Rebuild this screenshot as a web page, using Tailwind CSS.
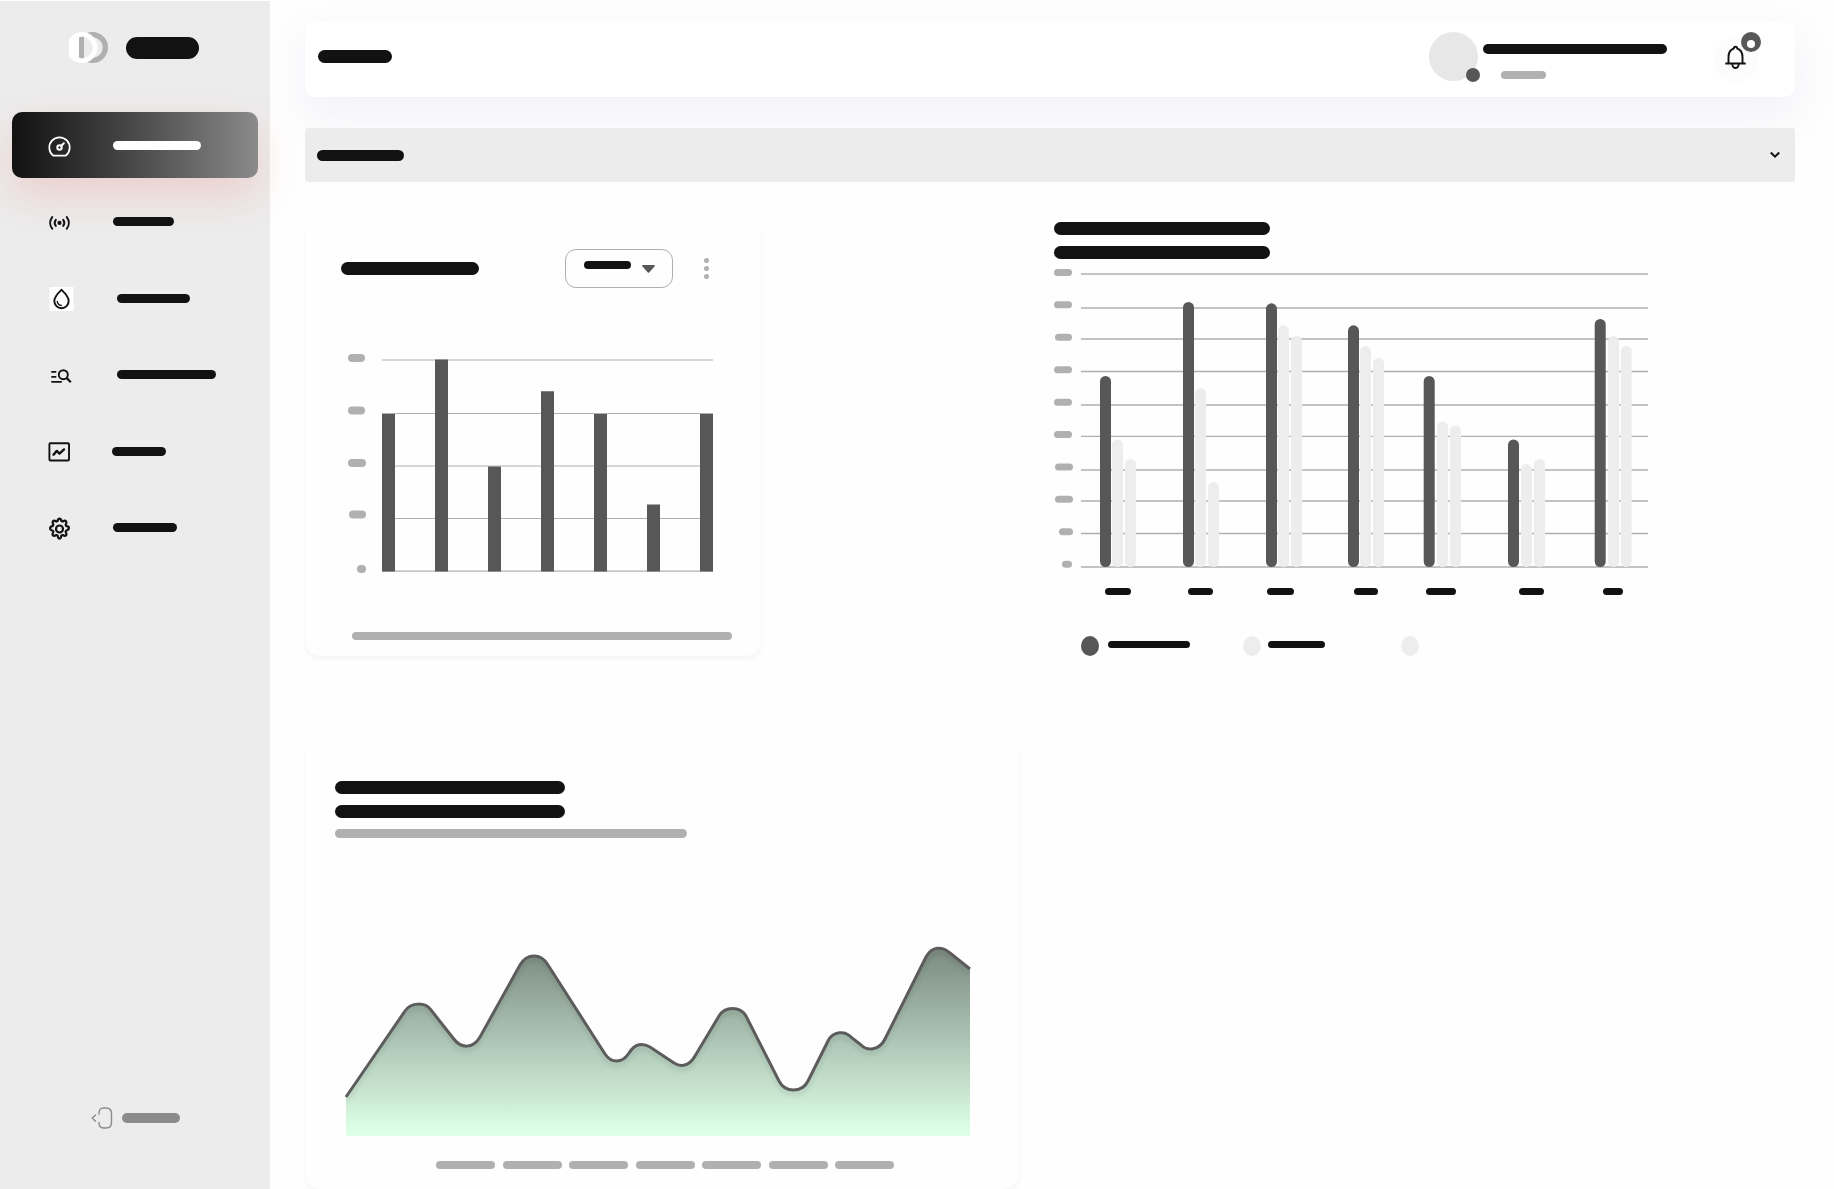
<!DOCTYPE html>
<html lang="en">
<head>
<meta charset="utf-8">
<meta name="viewport" content="width=device-width, initial-scale=1">
<title>Dashboard</title>
<script src="https://cdn.jsdelivr.net/npm/@tailwindcss/browser@4"></script>
</head>
<body class="flex min-h-screen bg-[#fefefe] font-[Inter,sans-serif]">

<!-- Sidebar -->
<aside class="relative z-10 mt-px flex w-[270px] shrink-0 flex-col bg-[#ececec]">
  <a href="#" aria-label="Home" class="mt-[31px] ml-[69px] flex items-center gap-[18px]">
    <svg class="h-8 w-[39px]" viewBox="0 0 39 32" fill="none">
      <circle cx="23.500" cy="15.500" r="12.900" stroke="#b0b0b0" stroke-width="5.200"/>
      <path d="M0 7.500C3 2.500 8 0 13 0a15.500 15.500 0 0 1 0 31C8 31 3 28.500 0 24Z" fill="#fff"/>
      <path d="M10 5.600C11 5 12 4.800 13 4.800a10.700 10.700 0 0 1 0 21.400C12 26.200 11 26 10 25.400Z" fill="#ececec"/>
      <path d="M10 5.600C11 5 13.500 4.500 15 5v21C13.500 26.500 11 26 10 25.400Z" fill="#b0b0b0"/>
    </svg>
    <span class="h-[22px] w-[73px] rounded-full bg-[#121212]"></span>
  </a>

  <nav class="mt-12 flex h-[449px] flex-col justify-between px-3">
    <a href="#" aria-label="Dashboard" class="flex h-[66px] items-center gap-[39px] rounded-[10px] bg-linear-to-r from-[#121212] to-[#8b8b8b] pl-[34px] shadow-[0_17px_40px_rgba(234,75,66,0.18)]">
      <svg class="size-7" viewBox="0 0 28 28" fill="none" stroke="#fff" stroke-width="1.700" stroke-linecap="round" stroke-linejoin="round">
        <path d="M7.200 24.600A10.200 10.200 0 1 1 19.800 24.600Z"/>
        <circle cx="13.500" cy="16.500" r="2.200" stroke-width="2"/>
        <path d="m15.300 14.700 2.500-2.500" stroke-width="2"/>
      </svg>
      <span class="h-[9px] w-[88px] rounded-full bg-white"></span>
    </a>
    <a href="#" aria-label="Broadcast" class="flex h-[66px] items-center gap-[39px] pl-[34px]">
      <svg class="size-7" viewBox="0 0 28 28" fill="none" stroke="#121212" stroke-width="2" stroke-linecap="round">
        <circle cx="13.500" cy="14.900" r="2.100" fill="#121212" stroke="none"/>
        <path d="M9.800 11.900a5 5 0 0 0 0 6M17.200 11.900a5 5 0 0 1 0 6M6.200 9.100a9.500 9.500 0 0 0 0 11.600M20.800 9.100a9.500 9.500 0 0 1 0 11.600"/>
      </svg>
      <span class="h-[9px] w-[61px] rounded-full bg-[#121212]"></span>
    </a>
    <a href="#" aria-label="Water" class="flex h-[66px] items-center gap-[43px] pl-[34px]">
      <svg class="size-7" viewBox="0 0 28 28" fill="none" stroke="#121212" stroke-linecap="round" stroke-linejoin="round">
        <path d="M3.500 3h24v24h-24z" fill="#fff" stroke="none"/>
        <path d="M15.500 5.800c3 2.800 7.200 6.700 7.200 11.300a7.200 7.200 0 0 1-14.400 0c0-4.600 4.200-8.500 7.200-11.300Z" stroke-width="1.900"/>
        <path d="M11.300 17.500a4 4 0 0 0 4.200 3.900" stroke-width="1.400"/>
      </svg>
      <span class="h-[9px] w-[73px] rounded-full bg-[#121212]"></span>
    </a>
    <a href="#" aria-label="Search list" class="flex h-[66px] items-center gap-[43px] pl-[34px]">
      <svg class="size-7" viewBox="0 0 28 28" fill="none" stroke="#121212" stroke-width="1.900">
        <path d="M5.300 10.900h5M5.300 15.900h5M5.300 20.900h10.500"/>
        <circle cx="17.300" cy="13.700" r="4.500"/>
        <path d="m20.500 16.900 4.300 4.300" stroke-width="2.200"/>
      </svg>
      <span class="h-[9px] w-[99px] rounded-full bg-[#121212]"></span>
    </a>
    <a href="#" aria-label="Charts" class="flex h-[66px] items-center gap-[38px] pl-[34px]">
      <svg class="size-7" viewBox="0 0 28 28" fill="none" stroke="#121212" stroke-width="1.900" stroke-linecap="round" stroke-linejoin="round">
        <rect x="3.400" y="6.200" width="19.600" height="17.300" rx="1"/>
        <path d="m7.500 17.700 3.300-3.800 2.700 2.700 4.500-4.200" stroke-width="2.400"/>
      </svg>
      <span class="h-[9px] w-[54px] rounded-full bg-[#121212]"></span>
    </a>
    <a href="#" aria-label="Settings" class="flex h-[66px] items-center gap-[39px] pl-[34px]">
      <svg class="size-7" viewBox="0 0 28 28" fill="none" stroke="#121212" stroke-width="2.200" stroke-linejoin="round">
        <circle cx="13.500" cy="15" r="3.500"/>
        <path d="M11.600 7c.3-1.600.9-2.400 1.900-2.400s1.600.8 1.900 2.400l1.300.6c1.400-.9 2.700-1.100 3.300-.4.700.7.500 1.900-.4 3.300l.5 1.300c1.700.3 2.800 1 2.800 2s-.9 2.400-2.800 2.900l-.5 1.300c.9 1.400 1.100 2.700.4 3.400s-1.900.5-3.300-.4l-1.300.5c-.3 1.900-.9 3.100-1.900 3.100s-1.600-1.200-1.900-3.100l-1.300-.5c-1.400.9-2.600 1.100-3.300.4s-.5-2 .4-3.400l-.5-1.300c-1.900-.5-2.800-1.300-2.800-2.300s1.100-2.300 2.800-2.600l.5-1.300c-.9-1.400-1.100-2.600-.4-3.300.6-.7 1.900-.5 3.300.4Z"/>
      </svg>
      <span class="h-[9px] w-16 rounded-full bg-[#121212]"></span>
    </a>
  </nav>

  <button type="button" aria-label="Log out" class="mt-auto mb-[60px] ml-[91px] flex items-center gap-[9px] self-start">
    <svg class="h-[22px] w-[22px]" viewBox="0 0 22 22" fill="none" stroke="#8b8b8b" stroke-width="1.400" stroke-linecap="round" stroke-linejoin="round">
      <path d="M8 7C8 3 9 1 12.500 1h2.500c4 0 5.500 2 5.500 5.500v9c0 4-1.500 5.500-5.500 5.500h-2.500C9 21 8 19 8 15.500M4.500 8 1.200 11l3.300 3.300"/>
    </svg>
    <span class="h-[10px] w-[58px] rounded-full bg-[#8b8b8b]"></span>
  </button>
</aside>

<div class="flex min-w-0 flex-1 flex-col pt-[21px] pr-[39px] pl-[35px]">

  <!-- Top bar -->
  <header class="flex h-[76px] items-center rounded-[10px] bg-white pr-[34px] pb-[5px] pl-[13px] shadow-[0_17px_40px_4px_rgba(112,112,176,0.08)]">
    <h1 aria-label="Overview" class="h-[13px] w-[74px] rounded-full bg-[#121212]"></h1>
    <div class="relative ml-auto size-[49px] rounded-full bg-[#e7e7e7]">
      <span class="absolute -right-0.5 -bottom-px size-[14px] rounded-full bg-[#575757]"></span>
    </div>
    <div class="ml-[5px] flex h-[49px] w-[184px] flex-col gap-[17px] pt-3">
      <span class="h-[10px] rounded-full bg-[#121212]"></span>
      <span class="ml-[18px] h-2 w-[45px] rounded-full bg-[#b0b0b0]"></span>
    </div>
    <button type="button" aria-label="Notifications" class="ml-[47px]">
      <svg class="h-[50px] w-[47px]" viewBox="0 0 47 50" fill="none">
        <circle cx="22" cy="27.500" r="22.500" fill="#fcfcfc"/>
        <path d="M14.500 31V25c0-4.500 2.500-7.500 5.300-8.500a1.700 1.700 0 0 1 3.400 0c2.800 1 5.300 4 5.300 8.500v6M11.300 31.500h20.400M18.300 32a3.200 4 0 0 0 6.400 0" stroke="#121212" stroke-width="1.900" stroke-linejoin="round"/>
        <circle cx="37" cy="10" r="10" fill="#575757"/>
        <circle cx="37" cy="12" r="4" fill="#fff"/>
      </svg>
    </button>
  </header>

  <!-- Section picker -->
  <div class="mt-[31px] grid items-center">
    <select aria-label="Section" class="col-start-1 row-start-1 h-[54px] w-full appearance-none rounded-[3px] bg-[#ececec]"></select>
    <div class="pointer-events-none col-start-1 row-start-1 flex items-center justify-between pr-[15px] pl-3">
      <span class="h-[11px] w-[87px] rounded-full bg-[#121212]"></span>
      <svg class="h-2 w-[10px]" viewBox="0 0 10 8" fill="none" stroke="#121212" stroke-width="2"><path d="m.8 1.500 4.200 4.200 4.200-4.200"/></svg>
    </div>
  </div>

  <main class="mt-[34px] grid grid-cols-2 items-start gap-x-2 gap-y-[82px]">

    <!-- Single series bar chart -->
    <section class="max-w-[456px] rounded-[15px] bg-[#fefefe] pb-4 pl-9 shadow-[0_3px_5px_rgba(0,0,0,0.04)]">
      <div class="flex items-center pt-[33px] pr-[52px]">
        <h2 aria-label="Activity" class="h-[13px] w-[138px] rounded-full bg-[#121212]"></h2>
        <button type="button" aria-label="Period" class="ml-auto flex h-[39px] w-[108px] items-center gap-[11px] rounded-[11px] border border-[#b0b0b0] pl-[18px]">
          <span class="mb-2 h-2 w-[47px] rounded-full bg-[#121212]"></span>
          <svg class="h-2 w-[13px]" viewBox="0 0 13 8" fill="#575757"><path d="M1 0h11q1.500.3.500 1.500L7.200 7.400q-.7.600-1.400 0L.5 1.500Q-.5.300 1 0Z"/></svg>
        </button>
        <button type="button" aria-label="More" class="ml-[31px] flex flex-col gap-[3px]">
          <span class="size-[5px] rounded-full bg-[#b0b0b0]"></span>
          <span class="size-[5px] rounded-full bg-[#b0b0b0]"></span>
          <span class="size-[5px] rounded-full bg-[#b0b0b0]"></span>
        </button>
      </div>
      <svg class="mt-[62px] h-[230px] w-[380px]" viewBox="0 0 380 230">
        <g fill="#b0b0b0">
          <rect x="7" y="4" width="17" height="8" rx="4"/>
          <rect x="7" y="56.500" width="17" height="8" rx="4"/>
          <rect x="7" y="109" width="18" height="8" rx="4"/>
          <rect x="8" y="160.500" width="17" height="8" rx="4"/>
          <rect x="16" y="215" width="9" height="8" rx="4"/>
        </g>
        <path d="M41 10h331M41 63.500h331M41 116h331M41 168.500h331M41 221.200h331" stroke="#b0b0b0" stroke-width="1.200"/>
        <path d="M41 64h13v157.500H41zM94 9.500h13v212H94zM147 116.500h13v105h-13zM200 41.300h13v180.200h-13zM253 64h13v157.500h-13zM306 154.600h13v66.900h-13zM359 64h13v157.500h-13z" fill="#575757"/>
      </svg>
      <div class="mt-[52px] ml-[11px] h-2 w-[380px] rounded-full bg-[#b0b0b0]"></div>
    </section>

    <!-- Grouped bar chart -->
    <section class="flex flex-col pt-[6px]">
      <h2 aria-label="Comparison" class="flex w-[216px] flex-col gap-[11px]">
        <span class="h-[13px] rounded-full bg-[#121212]"></span>
        <span class="h-[13px] rounded-full bg-[#121212]"></span>
      </h2>
      <svg class="mt-[6px] h-[335px] w-[600px]" viewBox="1054 265 600 335">
        <g fill="#b0b0b0">
          <rect x="1054" y="269" width="18" height="7" rx="3.500"/>
          <rect x="1054" y="301.300" width="18" height="7" rx="3.500"/>
          <rect x="1055" y="333.800" width="17" height="7" rx="3.500"/>
          <rect x="1054" y="366.300" width="18" height="7" rx="3.500"/>
          <rect x="1054" y="398.700" width="18" height="7" rx="3.500"/>
          <rect x="1054" y="431" width="18" height="7" rx="3.500"/>
          <rect x="1055" y="463.500" width="18" height="7" rx="3.500"/>
          <rect x="1055" y="495.800" width="18" height="7" rx="3.500"/>
          <rect x="1059" y="528.300" width="14" height="7" rx="3.500"/>
          <rect x="1062" y="560.700" width="10" height="7" rx="3.500"/>
        </g>
        <path d="M1081 274h567M1081 308h567M1081 339h567M1081 371.500h567M1081 405h567M1081 436.300h567M1081 470h567M1081 501h567M1081 533.500h567M1081 567h567" stroke="#b0b0b0" stroke-width="1.300"/>
        <g fill="#575757">
          <rect x="1100" y="376" width="11" height="191" rx="5.500"/>
          <rect x="1183" y="302" width="11" height="265" rx="5.500"/>
          <rect x="1266" y="303.300" width="11" height="263.700" rx="5.500"/>
          <rect x="1348" y="325.300" width="11" height="241.700" rx="5.500"/>
          <rect x="1423.700" y="376" width="11" height="191" rx="5.500"/>
          <rect x="1508" y="439.500" width="11" height="127.500" rx="5.500"/>
          <rect x="1594.700" y="319" width="11" height="248" rx="5.500"/>
        </g>
        <g fill="#ededed">
          <rect x="1112" y="439.500" width="11" height="127.500" rx="5.500"/>
          <rect x="1125" y="459" width="11" height="108" rx="5.500"/>
          <rect x="1195" y="388" width="11" height="179" rx="5.500"/>
          <rect x="1208" y="482" width="11" height="85" rx="5.500"/>
          <rect x="1278" y="325.300" width="11" height="241.700" rx="5.500"/>
          <rect x="1291" y="336" width="11" height="231" rx="5.500"/>
          <rect x="1360" y="346" width="11" height="221" rx="5.500"/>
          <rect x="1373" y="358" width="11" height="209" rx="5.500"/>
          <rect x="1437" y="421.500" width="11" height="145.500" rx="5.500"/>
          <rect x="1450" y="425.500" width="11" height="141.500" rx="5.500"/>
          <rect x="1521" y="464" width="11" height="103" rx="5.500"/>
          <rect x="1534" y="459" width="11" height="108" rx="5.500"/>
          <rect x="1608" y="336" width="11" height="231" rx="5.500"/>
          <rect x="1620.700" y="346" width="11" height="221" rx="5.500"/>
        </g>
        <g fill="#121212">
          <rect x="1105" y="588" width="26" height="7" rx="3.500"/>
          <rect x="1188" y="588" width="25" height="7" rx="3.500"/>
          <rect x="1267" y="588" width="27" height="7" rx="3.500"/>
          <rect x="1354" y="588" width="24" height="7" rx="3.500"/>
          <rect x="1426" y="588" width="30" height="7" rx="3.500"/>
          <rect x="1519" y="588" width="25" height="7" rx="3.500"/>
          <rect x="1603" y="588" width="20" height="7" rx="3.500"/>
        </g>
      </svg>
      <ul class="mt-9 ml-[27px] grid grid-cols-[162px_158px_158px]">
        <li class="flex items-center gap-[9px]"><span class="h-5 w-[18px] rounded-[50%] bg-[#575757]"></span><span class="mb-[3px] h-[7px] w-[82px] rounded-full bg-[#121212]"></span></li>
        <li class="flex items-center gap-[7px]"><span class="h-5 w-[18px] rounded-[50%] bg-[#ededed]"></span><span class="mb-[3px] h-[7px] w-[57px] rounded-full bg-[#121212]"></span></li>
        <li class="flex items-center"><span class="h-5 w-[18px] rounded-[50%] bg-[#ededed]"></span></li>
      </ul>
    </section>

    <!-- Area chart -->
    <section class="max-w-[714px] rounded-[15px] bg-[#fefefe] pt-[43px] pb-5 pl-[30px] shadow-[0_3px_5px_rgba(0,0,0,0.04)]">
      <h2 aria-label="Trend" class="flex w-[230px] flex-col gap-[11px]">
        <span class="h-[13px] rounded-full bg-[#121212]"></span>
        <span class="h-[13px] rounded-full bg-[#121212]"></span>
      </h2>
      <div class="mt-[11px] h-[9px] w-[352px] rounded-full bg-[#b0b0b0]"></div>
      <svg class="mt-[102px] h-[200px] w-[645px]" viewBox="335 939 645 200" fill="none">
        <defs>
          <linearGradient id="area" gradientUnits="userSpaceOnUse" x1="0" y1="948" x2="0" y2="1134">
            <stop offset="0" stop-color="#7b8b80"/>
            <stop offset=".5" stop-color="#aec6b6"/>
            <stop offset=".82" stop-color="#cdebd5"/>
            <stop offset=".94" stop-color="#d9fce3"/>
            <stop offset="1" stop-color="#dcffe6"/>
          </linearGradient>
          <clipPath id="under"><path d="M346 1096L405 1010C411 1001 425 1001 431 1009L453 1037C461 1048 473 1048 480 1036L520 964C527 952 541 952 548 964L605 1053C611 1062 622 1063 629 1052C635 1042 643 1042 650 1046L674 1062C682 1067 690 1064 695 1055L719 1015C725 1005 740 1005 746 1015L779 1080C785 1092 802 1092 808 1080L828 1040C833 1030 845 1029 852 1037L861 1044C867 1050 879 1050 885 1038L926 956C932 945 942 945 950 952L970 968V1134.700H346Z"/></clipPath>
        </defs>
        <path fill="url(#area)" d="M346 1096L405 1010C411 1001 425 1001 431 1009L453 1037C461 1048 473 1048 480 1036L520 964C527 952 541 952 548 964L605 1053C611 1062 622 1063 629 1052C635 1042 643 1042 650 1046L674 1062C682 1067 690 1064 695 1055L719 1015C725 1005 740 1005 746 1015L779 1080C785 1092 802 1092 808 1080L828 1040C833 1030 845 1029 852 1037L861 1044C867 1050 879 1050 885 1038L926 956C932 945 942 945 950 952L970 968V1134.700H346Z"/>
        <g clip-path="url(#under)">
          <path class="blur-[2px]" transform="translate(0 4)" stroke="#000" stroke-opacity=".1" stroke-width="3" d="M346 1096L405 1010C411 1001 425 1001 431 1009L453 1037C461 1048 473 1048 480 1036L520 964C527 952 541 952 548 964L605 1053C611 1062 622 1063 629 1052C635 1042 643 1042 650 1046L674 1062C682 1067 690 1064 695 1055L719 1015C725 1005 740 1005 746 1015L779 1080C785 1092 802 1092 808 1080L828 1040C833 1030 845 1029 852 1037L861 1044C867 1050 879 1050 885 1038L926 956C932 945 942 945 950 952L970 968"/>
        </g>
        <path stroke="#5c5c5c" stroke-width="3" d="M346 1096L405 1010C411 1001 425 1001 431 1009L453 1037C461 1048 473 1048 480 1036L520 964C527 952 541 952 548 964L605 1053C611 1062 622 1063 629 1052C635 1042 643 1042 650 1046L674 1062C682 1067 690 1064 695 1055L719 1015C725 1005 740 1005 746 1015L779 1080C785 1092 802 1092 808 1080L828 1040C833 1030 845 1029 852 1037L861 1044C867 1050 879 1050 885 1038L926 956C932 945 942 945 950 952L970 968"/>
      </svg>
      <div class="mt-[21px] ml-[101px] flex w-[458px] justify-between">
        <span class="h-2 w-[59px] rounded-full bg-[#b0b0b0]"></span>
        <span class="h-2 w-[59px] rounded-full bg-[#b0b0b0]"></span>
        <span class="h-2 w-[59px] rounded-full bg-[#b0b0b0]"></span>
        <span class="h-2 w-[59px] rounded-full bg-[#b0b0b0]"></span>
        <span class="h-2 w-[59px] rounded-full bg-[#b0b0b0]"></span>
        <span class="h-2 w-[59px] rounded-full bg-[#b0b0b0]"></span>
        <span class="h-2 w-[59px] rounded-full bg-[#b0b0b0]"></span>
      </div>
    </section>
  </main>
</div>
</body>
</html>
